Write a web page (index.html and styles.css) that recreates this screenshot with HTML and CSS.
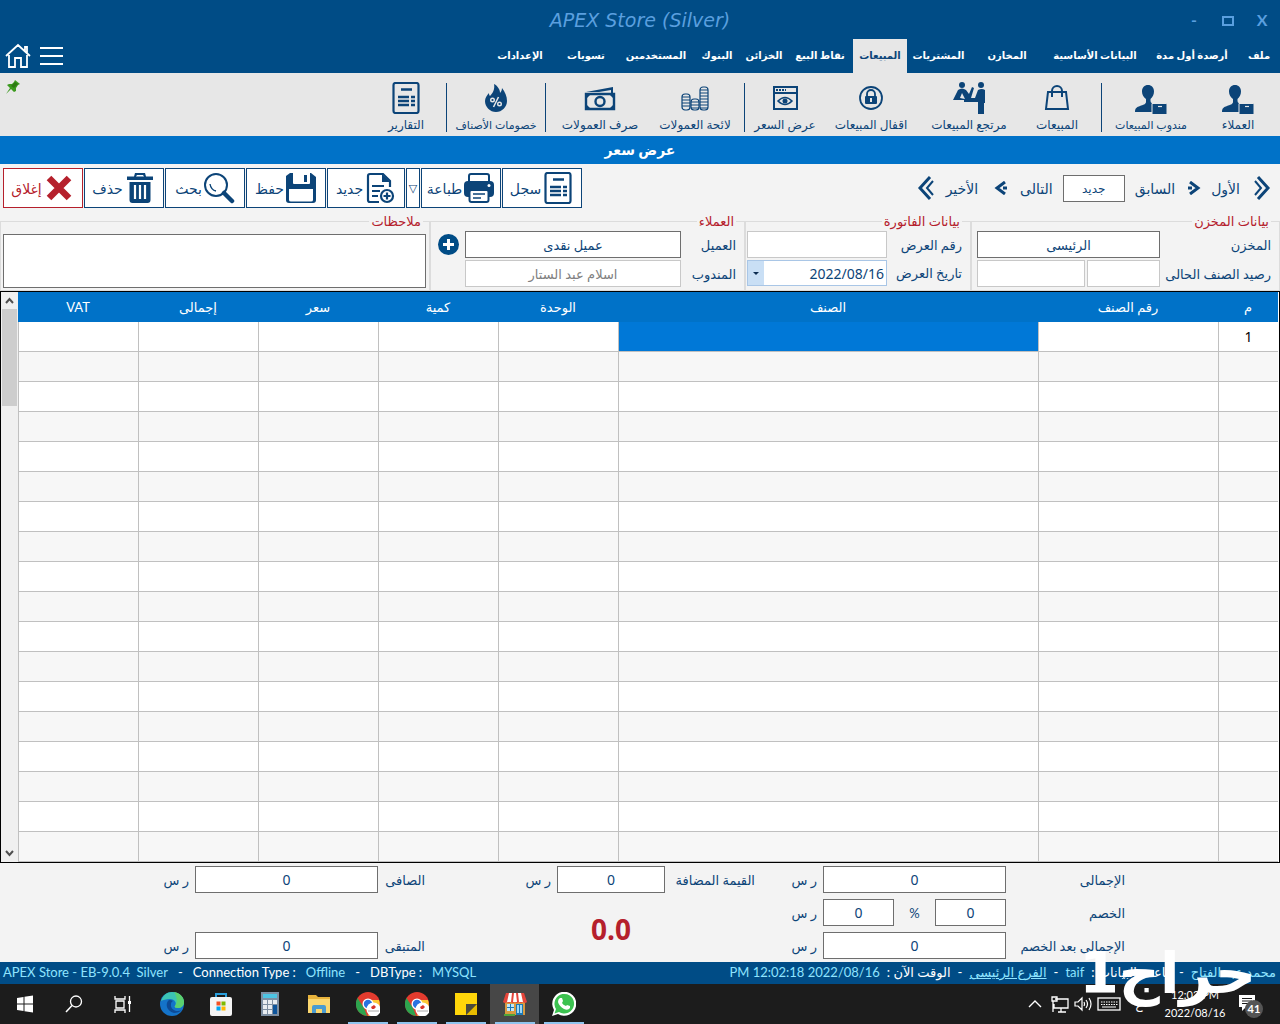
FILE: index.html
```html
<!DOCTYPE html>
<html lang="ar" dir="rtl">
<head>
    <meta charset="UTF-8">
    <meta name="viewport" content="width=device-width, initial-scale=1.0">
    <title>APEX Store (Silver)</title>
    <link rel="stylesheet" href="styles.css">
</head>
<body>
<svg style="display:none;">
    <symbol id="icon-home" viewBox="0 0 26 26">
        <path d="M1 13L13 2l12 11M20 8V4h2v6M4 12v12h6v-9h6v9h6V12" fill="none" stroke="#fff" stroke-width="1.8"/>
    </symbol>
    <symbol id="icon-pin" viewBox="0 0 16 16">
        <path d="M10 1l5 4-2 1-2 3 0 3-2 1-3-3-5 5 4-6-3-3 2-1 3 0 2-2z" fill="#3c9a1e"/>
        <path d="M10 3l3 2-4 4-3-2z" fill="#2d7a12"/>
    </symbol>
    <symbol id="icon-customer" viewBox="0 0 32 32">
        <path d="M13 3c3.500 0 6 2.500 6 6.500 0 3-1.500 6-3.500 7.500v2c0 2 2 2.500 3 3V30H0c0-4 2-5 5-6 3-1 6-2 6-4v-3C8.500 15.500 7 12.500 7 9.500 7 5.500 9.500 3 13 3z"/>
        <path d="M17 21.500h14a1 1 0 0 1 1 1V32a1 1 0 0 1-1 1H18a1 1 0 0 1-1-1z" stroke="#e7e7e7"/>
        <path d="M23 24.500h4" stroke="#e7e7e7" stroke-width="1.200"/>
    </symbol>
    <symbol id="icon-bag" viewBox="0 0 32 32">
        <path d="M7 10h18l2 17H5zM11 15V9a5 5 0 0 1 10 0v6" fill="none" stroke="currentColor" stroke-width="2"/>
    </symbol>
    <symbol id="icon-return" viewBox="0 0 32 32">
        <circle cx="9" cy="3" r="3"/>
        <circle cx="28" cy="3" r="3"/>
        <path d="M0 18L5 8q4-3 8 0l3 4 3-7 2 1-3 10h4l3-8q4-2 7 0v13h-1v11h-6V20H11v-2z"/>
        <path d="M9 11l-2 5 5 1z" fill="#e7e7e7"/>
    </symbol>
    <symbol id="icon-lock" viewBox="0 0 32 32">
        <circle cx="16" cy="16" r="11" fill="none" stroke="currentColor" stroke-width="1.800"/>
        <path d="M12 15v-3a4 4 0 0 1 8 0v3" fill="none" stroke="currentColor" stroke-width="1.800"/>
        <rect x="10" y="14" width="12" height="8" rx="1"/>
        <path d="M16 16v4" stroke="#e7e7e7" stroke-width="2"/>
    </symbol>
    <symbol id="icon-preview" viewBox="0 0 32 32">
        <path d="M5 5h23v22H5zM5 11h23" fill="none" stroke="currentColor" stroke-width="2"/>
        <path d="M7 8h10" stroke="currentColor" stroke-width="2" stroke-dasharray="2 1"/>
        <path d="M9 19q7-7 14 0-7 7-14 0z" fill="none" stroke="currentColor" stroke-width="1.600"/>
        <circle cx="16" cy="19" r="2.500"/>
    </symbol>
    <symbol id="icon-coins" viewBox="0 0 32 32">
        <g fill="none" stroke="currentColor" stroke-width="1.200">
            <rect x="3" y="12" width="8" height="16" rx="3"/>
            <rect x="12" y="17" width="8" height="11" rx="3"/>
            <rect x="21" y="5" width="8" height="23" rx="3"/>
            <path d="M3 15h8M3 18h8M3 21h8M3 24h8M12 20h8M12 23h8M12 26h8M21 8h8M21 11h8M21 14h8M21 17h8M21 20h8M21 23h8M21 26h8"/>
        </g>
    </symbol>
    <symbol id="icon-cash" viewBox="0 0 32 32">
        <path d="M2 12h28v15H2z" fill="none" stroke="currentColor" stroke-width="2.400"/>
        <path d="M2 10l27-5v6h-2V8l-12 2z"/>
        <circle cx="16" cy="19.500" r="4.500" fill="none" stroke="currentColor" stroke-width="2.400"/>
        <path d="M2 12h5l-5 5zM30 12h-5l5 5zM2 27h5l-5-5zM30 27h-5l5-5z"/>
    </symbol>
    <symbol id="icon-fire" viewBox="0 0 32 32">
        <path d="M14 2c4 2 6 6 6 9 1-1 2-3 2-5 3 4 5 8 5 13 0 6-5 11-11 11S5 25 5 19c0-3 2-6 4-8 0 1 0 2 1 3 3-3 5-7 4-12z"/>
        <path d="M18.500 15l-5 10" stroke="#e7e7e7" stroke-width="1.600"/>
        <circle cx="12.500" cy="18" r="1.800" fill="none" stroke="#e7e7e7" stroke-width="1.400"/>
        <circle cx="19.500" cy="22" r="1.800" fill="none" stroke="#e7e7e7" stroke-width="1.400"/>
    </symbol>
    <symbol id="icon-report" viewBox="0 0 32 32">
        <rect x="3.500" y="1" width="25" height="30" rx="2" fill="none" stroke="currentColor" stroke-width="2.200"/>
        <path d="M11 7.500h11M8 15h11M8 19h11M8 23h11M21 15h4M21 19h4M21 23h4" stroke="currentColor" stroke-width="2.600"/>
    </symbol>
    <symbol id="icon-printer" viewBox="0 0 32 32">
        <path d="M6 10V4a2 2 0 0 1 2-2h16a2 2 0 0 1 2 2v6" fill="none" stroke="currentColor" stroke-width="2"/>
        <rect x="1" y="9" width="30" height="16" rx="4"/>
        <rect x="6.500" y="18" width="19" height="12" rx="2" fill="#fff" stroke="currentColor" stroke-width="2"/>
        <path d="M10 22h12M10 26h8" stroke="currentColor" stroke-width="1.600"/>
        <circle cx="26" cy="13.500" r="1.500" fill="#fff"/>
    </symbol>
    <symbol id="icon-new" viewBox="0 0 32 32">
        <path d="M15 30H6a2 2 0 0 1-2-2V4a2 2 0 0 1 2-2h13l7 7v6" fill="none" stroke="currentColor" stroke-width="2.200"/>
        <path d="M18 2v8h8z"/>
        <path d="M8 14h12M8 19h8M8 24h6" stroke="currentColor" stroke-width="2.200"/>
        <circle cx="23" cy="24" r="6" fill="#fff" stroke="currentColor" stroke-width="2.200"/>
        <path d="M23 20.500v7M19.500 24h7" stroke="currentColor" stroke-width="2.200"/>
    </symbol>
    <symbol id="icon-save" viewBox="0 0 32 32">
        <path d="M5 1h21l5 4v23a3 3 0 0 1-3 3H4a3 3 0 0 1-3-3V4z"/>
        <path d="M8 1h17v10a1 1 0 0 1-1 1H9a1 1 0 0 1-1-1zM4 17h24v11q0 1.500-2 1.500H6q-2 0-2-1.500z" fill="#fff"/>
        <path d="M19 3h3v7h-3z"/>
    </symbol>
    <symbol id="icon-search" viewBox="0 0 32 32">
        <circle cx="13" cy="13" r="11" fill="none" stroke="currentColor" stroke-width="2"/>
        <path d="M7 12q1 6 6 7" fill="none" stroke="currentColor" stroke-width="1.400"/>
        <path d="M21 21l8 8" stroke="currentColor" stroke-width="4.500" stroke-linecap="round"/>
    </symbol>
    <symbol id="icon-trash" viewBox="0 0 32 32">
        <path d="M3 4.500h7l1-3.500h10l1 3.500h7V8H3zM13 3l-1 1.500h8L19 3z" fill-rule="evenodd"/>
        <path d="M5.500 10h21v18a3 3 0 0 1-3 3h-15a3 3 0 0 1-3-3z"/>
        <path d="M11 13v14M16 13v14M21 13v14" stroke="#fff" stroke-width="2.200"/>
    </symbol>
    <symbol id="icon-close" viewBox="0 0 32 32">
        <path d="M6 6l20 20M26 6L6 26" stroke="currentColor" stroke-width="6.500"/>
    </symbol>
    <symbol id="icon-first" viewBox="0 0 20 24">
        <path d="M3 5l6 7-6 7" fill="none" stroke="currentColor" stroke-width="2"/>
        <path d="M6 1l10 11L6 23" fill="none" stroke="currentColor" stroke-width="3"/>
    </symbol>
    <symbol id="icon-next" viewBox="0 0 14 14">
        <path d="M3 1l8 6-8 6" fill="none" stroke="currentColor" stroke-width="3"/>
        <path d="M1 5.500h4v3H1z"/>
    </symbol>
</svg>

<header class="title-bar">
    <div class="window-buttons">
        <button type="button">X</button>
        <button type="button" aria-label="تكبير"><span class="restore"></span></button>
        <button type="button">-</button>
    </div>
    <h1 dir="ltr">APEX Store (Silver)</h1>
</header>

<nav class="menu">
    <a href="#">ملف</a>
    <a href="#">أرصدة أول مدة</a>
    <a href="#">البيانات الأساسية</a>
    <a href="#">المخازن</a>
    <a href="#">المشتريات</a>
    <a href="#" class="active">المبيعات</a>
    <a href="#">نقاط البيع</a>
    <a href="#">الخزائن</a>
    <a href="#">البنوك</a>
    <a href="#">المستخدمين</a>
    <a href="#">تسويات</a>
    <a href="#">الإعدادات</a>
    <div class="menu-tools">
        <button type="button" class="burger" aria-label="القائمة"><i></i><i></i><i></i></button>
        <button type="button" aria-label="الرئيسية"><svg class="home"><use href="#icon-home"/></svg></button>
    </div>
</nav>

<section class="ribbon">
    <a href="#" class="w84"><svg class="icon"><use href="#icon-customer"/></svg><span>العملاء</span></a>
    <a href="#" class="w90 small"><svg class="icon"><use href="#icon-customer"/></svg><span>مندوب المبيعات</span></a>
    <div class="sep"></div>
    <a href="#" class="w80"><svg class="icon"><use href="#icon-bag"/></svg><span>المبيعات</span></a>
    <a href="#" class="w96"><svg class="icon"><use href="#icon-return"/></svg><span>مرتجع المبيعات</span></a>
    <a href="#" class="w100"><svg class="icon"><use href="#icon-lock"/></svg><span>اقفال المبيعات</span></a>
    <a href="#" class="w72"><svg class="icon"><use href="#icon-preview"/></svg><span>عرض السعر</span></a>
    <div class="sep"></div>
    <a href="#" class="w90"><svg class="icon"><use href="#icon-coins"/></svg><span>لائحة العمولات</span></a>
    <a href="#" class="w100"><svg class="icon"><use href="#icon-cash"/></svg><span>صرف العمولات</span></a>
    <div class="sep"></div>
    <a href="#" class="w90 small"><svg class="icon"><use href="#icon-fire"/></svg><span>خصومات الأصناف</span></a>
    <div class="sep"></div>
    <a href="#" class="w72"><svg class="icon"><use href="#icon-report"/></svg><span>التقارير</span></a>
    <svg class="pin"><use href="#icon-pin"/></svg>
</section>

<h2 class="page-title">عرض سعر</h2>

<section class="toolbar">
    <div class="pager">
        <button type="button"><svg class="double"><use href="#icon-first"/></svg>الأول</button>
        <button type="button"><svg class="single"><use href="#icon-next"/></svg>السابق</button>
        <input type="text" value="جديد" aria-label="رقم السجل">
        <button type="button">التالى<svg class="single flip"><use href="#icon-next"/></svg></button>
        <button type="button" class="last">الأخير<svg class="double flip"><use href="#icon-first"/></svg></button>
    </div>
    <div class="actions">
        <button type="button"><svg class="icon"><use href="#icon-report"/></svg>سجل</button>
        <button type="button"><svg class="icon"><use href="#icon-printer"/></svg>طباعة</button>
        <button type="button" class="drop">▽</button>
        <button type="button" class="new"><svg class="icon"><use href="#icon-new"/></svg>جديد</button>
        <button type="button"><svg class="icon"><use href="#icon-save"/></svg>حفظ</button>
        <button type="button"><svg class="icon"><use href="#icon-search"/></svg>بحث</button>
        <button type="button"><svg class="icon"><use href="#icon-trash"/></svg>حذف</button>
        <button type="button" class="close"><svg class="icon"><use href="#icon-close"/></svg>إغلاق</button>
    </div>
</section>

<section class="groups">
    <fieldset>
        <legend>بيانات المخزن</legend>
        <div class="row">
            <label for="store">المخزن</label>
            <input id="store" class="wide" type="text" value="الرئيسى">
        </div>
        <div class="row">
            <label for="stock">رصيد الصنف الحالى</label>
            <div class="pair wide">
                <input id="stock" class="soft" type="text">
                <input class="soft grow" type="text" aria-label="الوحدة">
            </div>
        </div>
    </fieldset>
    <fieldset>
        <legend>بيانات الفاتورة</legend>
        <div class="row">
            <label for="offer">رقم العرض</label>
            <input id="offer" class="mid soft" type="text">
        </div>
        <div class="row">
            <label for="date">تاريخ العرض</label>
            <div class="mid date">
                <input id="date" type="text" value="2022/08/16">
                <button type="button" aria-label="اختر التاريخ"></button>
            </div>
        </div>
    </fieldset>
    <fieldset>
        <legend>العملاء</legend>
        <div class="row customer">
            <label for="customer">العميل</label>
            <input id="customer" type="text" value="عميل نقدى">
            <button type="button" class="add" aria-label="إضافة عميل"></button>
        </div>
        <div class="row customer">
            <label for="agent">المندوب</label>
            <input id="agent" class="soft gray" type="text" value="اسلام عبد الستار">
        </div>
    </fieldset>
    <fieldset class="notes">
        <legend>ملاحظات</legend>
        <textarea aria-label="ملاحظات"></textarea>
    </fieldset>
</section>

<section class="grid">
    <table>
        <colgroup>
            <col class="c-num"><col class="c-code"><col>
            <col class="c-val"><col class="c-val"><col class="c-val"><col class="c-val"><col class="c-val">
        </colgroup>
        <thead>
        <tr><th>م</th><th>رقم الصنف</th><th>الصنف</th><th>الوحدة</th><th>كمية</th><th>سعر</th><th>إجمالى</th><th>VAT</th></tr>
        </thead>
        <tbody>
        <tr><td>1</td><td></td><td class="selected"></td><td></td><td></td><td></td><td></td><td></td></tr>
        <tr><td></td><td></td><td></td><td></td><td></td><td></td><td></td><td></td></tr>
        <tr><td></td><td></td><td></td><td></td><td></td><td></td><td></td><td></td></tr>
        <tr><td></td><td></td><td></td><td></td><td></td><td></td><td></td><td></td></tr>
        <tr><td></td><td></td><td></td><td></td><td></td><td></td><td></td><td></td></tr>
        <tr><td></td><td></td><td></td><td></td><td></td><td></td><td></td><td></td></tr>
        <tr><td></td><td></td><td></td><td></td><td></td><td></td><td></td><td></td></tr>
        <tr><td></td><td></td><td></td><td></td><td></td><td></td><td></td><td></td></tr>
        <tr><td></td><td></td><td></td><td></td><td></td><td></td><td></td><td></td></tr>
        <tr><td></td><td></td><td></td><td></td><td></td><td></td><td></td><td></td></tr>
        <tr><td></td><td></td><td></td><td></td><td></td><td></td><td></td><td></td></tr>
        <tr><td></td><td></td><td></td><td></td><td></td><td></td><td></td><td></td></tr>
        <tr><td></td><td></td><td></td><td></td><td></td><td></td><td></td><td></td></tr>
        <tr><td></td><td></td><td></td><td></td><td></td><td></td><td></td><td></td></tr>
        <tr><td></td><td></td><td></td><td></td><td></td><td></td><td></td><td></td></tr>
        <tr><td></td><td></td><td></td><td></td><td></td><td></td><td></td><td></td></tr>
        <tr><td></td><td></td><td></td><td></td><td></td><td></td><td></td><td></td></tr>
        <tr><td></td><td></td><td></td><td></td><td></td><td></td><td></td><td></td></tr>
        </tbody>
    </table>
    <div class="scrollbar">
        <svg viewBox="0 0 17 17"><path d="M5 11l3.500-4 3.500 4" fill="none" stroke="#505050" stroke-width="2"/></svg>
        <div class="thumb"></div>
        <svg viewBox="0 0 17 17"><path d="M5 6l3.500 4L12 6" fill="none" stroke="#505050" stroke-width="2"/></svg>
    </div>
</section>

<section class="totals">
    <label for="total">الإجمالى</label>
    <input id="total" type="text" value="0">
    <span class="unit">ر س</span>
    <label for="tax">القيمة المضافة</label>
    <input id="tax" type="text" value="0">
    <span class="unit">ر س</span>
    <label for="net">الصافى</label>
    <input id="net" type="text" value="0">
    <span class="unit">ر س</span>

    <label for="discount">الخصم</label>
    <div class="discount">
        <input id="discount" type="text" value="0">
        <span>%</span>
        <input type="text" value="0" aria-label="قيمة الخصم">
    </div>
    <span class="unit">ر س</span>

    <label for="after" class="new-row">الإجمالى بعد الخصم</label>
    <input id="after" type="text" value="0">
    <span class="unit">ر س</span>
    <label for="rest" class="rest">المتبقى</label>
    <input id="rest" type="text" value="0">
    <span class="unit">ر س</span>
    <output class="sum">0.0</output>
</section>

<footer class="status">
    <div class="status-user">
        <b>محمد عبد الفتاح</b><i>-</i><span>قاعدة البيانات :</span><b dir="ltr">taif</b><i>-</i><a href="#">الفرع الرئيسى</a><i>-</i><span>الوقت الآن :</span><b dir="ltr">PM 12:02:18 2022/08/16</b>
    </div>
    <div class="status-app" dir="ltr">
        <b>APEX Store - EB-9.0.4&nbsp; Silver</b><i>-</i><span>Connection Type :</span><b>Offline</b><i>-</i><span>DBType :</span><b>MYSQL</b>
    </div>
</footer>

<div class="taskbar" dir="ltr">
    <div class="apps">
        <button type="button" aria-label="Start">
            <svg viewBox="0 0 24 24"><path d="M4 6l6.500-1v6.500H4zM11.500 4.800L20 3.500v8h-8.500zM4 12.500h6.500V19L4 18zM11.500 12.500H20v8l-8.500-1.300z" fill="#fff"/></svg>
        </button>
        <button type="button" aria-label="Search">
            <svg viewBox="0 0 24 24"><circle cx="14" cy="9.500" r="5.500" fill="none" stroke="#fff" stroke-width="1.300"/><path d="M10 13.500L4 20" stroke="#fff" stroke-width="1.500"/></svg>
        </button>
        <button type="button" aria-label="Task view">
            <svg viewBox="0 0 24 24"><path d="M4 4v3h10V4M5 9h8v7H5zM4 21v-3h10v3M18.500 4v16" fill="none" stroke="#fff" stroke-width="1.300"/><path d="M17 9h3v3h-3z" fill="#fff"/></svg>
        </button>
        <button type="button" aria-label="Edge">
            <svg viewBox="0 0 24 24">
                <circle cx="12" cy="12" r="12" fill="#1473c9"/>
                <path d="M1 9C3 3 7 0 12 0c7 0 12 5 12 10 0 4-3 6-6 6-2 0-4-1-3-2 2-3 0-7-5-7-4 0-7 1-9 2z" fill="#3cc4b4"/>
                <path d="M14 0c6 1 10 5 10 10 0 4-3 6-6 6-2 0-4-1-3-2 3-4 2-9-1-14z" fill="#5bd06f"/>
                <path d="M9 8c-4 3-3 11 5 13 3 0 6-1 8-3-6 3-12-1-11-6 0-2 1-2 2-3-1-1-3-1-4-1z" fill="#0d4a96"/>
            </svg>
        </button>
        <button type="button" aria-label="Store">
            <svg viewBox="0 0 24 24">
                <path d="M7 6V2h10v4" fill="none" stroke="#2a9fdc" stroke-width="2"/>
                <rect x="1" y="5" width="22" height="19" rx="2" fill="#f4f4f4"/>
                <path d="M7.500 9.500h4v4h-4z" fill="#f25022"/><path d="M12.500 9.500h4v4h-4z" fill="#7fba00"/>
                <path d="M7.500 14.500h4v4h-4z" fill="#00a4ef"/><path d="M12.500 14.500h4v4h-4z" fill="#ffb900"/>
            </svg>
        </button>
        <button type="button" aria-label="Calculator">
            <svg viewBox="0 0 24 24">
                <rect x="3" width="18" height="24" fill="#7d8fa3"/>
                <path d="M5 2h14v4H5z" fill="#4dc4e4"/>
                <path d="M5 8h4v4H5zM10 8h4v4h-4zM15 8h4v4h-4zM5 13h4v4H5zM10 13h4v4h-4zM5 18h4v4H5zM10 18h4v4h-4z" fill="#e8edf2"/>
                <path d="M15 13h4v9h-4z" fill="#0d559c"/>
            </svg>
        </button>
        <button type="button" aria-label="Explorer">
            <svg viewBox="0 0 24 24">
                <path d="M1 3h8l2 2h12v16H1z" fill="#e8b33c"/><path d="M1 7h22v14H1z" fill="#fbd76f"/>
                <path d="M5 21v-6q0-2 2-2h10q2 0 2 2v6h-4v-4H9v4z" fill="#4a9bd0"/>
            </svg>
        </button>
        <button type="button" class="open" aria-label="Chrome">
            <svg viewBox="0 0 24 24">
                <circle cx="12" cy="12" r="12" fill="#e33b2e"/>
                <path d="M1.500 6L8 16l3 8A12 12 0 0 1 1.500 6z" fill="#2da44e"/><path d="M23 8H12l5 8-5 8A12 12 0 0 0 23 8z" fill="#fcc934"/>
                <circle cx="12" cy="12" r="5.500" fill="#fff"/><circle cx="12" cy="12" r="4.200" fill="#2a72e0"/>
                <circle cx="17.500" cy="17.500" r="7" fill="#fff"/><path d="M15 15l3-2 2 2-2 2h-2z" fill="#d8352a"/><path d="M12 19h11" stroke="#aaa"/>
            </svg>
        </button>
        <button type="button" class="open" aria-label="Chrome">
            <svg viewBox="0 0 24 24">
                <circle cx="12" cy="12" r="12" fill="#e33b2e"/>
                <path d="M1.500 6L8 16l3 8A12 12 0 0 1 1.500 6z" fill="#2da44e"/><path d="M23 8H12l5 8-5 8A12 12 0 0 0 23 8z" fill="#fcc934"/>
                <circle cx="12" cy="12" r="5.500" fill="#fff"/><circle cx="12" cy="12" r="4.200" fill="#2a72e0"/>
                <circle cx="17.500" cy="17.500" r="7" fill="#fff"/><path d="M15 15l3-2 2 2-2 2h-2z" fill="#d8352a"/><path d="M12 19h11" stroke="#aaa"/>
            </svg>
        </button>
        <button type="button" class="open" aria-label="Sticky notes">
            <svg viewBox="0 0 24 24"><path d="M1 1h22v11H12v11H1z" fill="#ffd60a"/><path d="M12 23V12h11z" fill="#4a4a3c"/><path d="M23 12v11H12z" fill="#e6bb00"/></svg>
        </button>
        <button type="button" class="open current" aria-label="APEX Store">
            <svg viewBox="0 0 24 24">
                <path d="M2 10h20v13H2z" fill="#d99a3f"/>
                <path d="M4 12h7v7H4z" fill="#bfe8fb"/><path d="M7.500 12v7M4 15.500h7" stroke="#1c79b8"/>
                <path d="M13 12h7v11h-7z" fill="#1c79b8"/><path d="M14 13h2v8h-2zM17 13h2v8h-2z" fill="#9fd8f5"/>
                <path d="M3 1h18l3 9q-2 2-4 0-2 2-4 0-2 2-4 0-2 2-4 0-2 2-4 0-2 2-4 0z" fill="#e5453a"/>
                <path d="M6 1h3l-1 9H4zM11 1h2l1 9h-4zM15 1h3l2 9h-4z" fill="#fff"/>
                <path d="M1 22h11v2H1z" fill="#4ea43a"/>
            </svg>
        </button>
        <button type="button" class="open" aria-label="WhatsApp">
            <svg viewBox="0 0 24 24">
                <path d="M0 24l2-6A12 12 0 1 1 6 22z" fill="#fff"/><path d="M2.500 21.500L4 17a9.800 9.800 0 1 1 3 3z" fill="#3cc250"/>
                <path d="M8 6l2 0 1 3-1 2q1 2 4 3l1-1 3 1v2q-2 3-6 1-5-3-6-7 0-3 2-4z" fill="#fff"/>
            </svg>
        </button>
    </div>
    <div class="tray">
        <svg viewBox="0 0 20 20"><path d="M4 13l6-6 6 6" fill="none" stroke="#fff" stroke-width="1.400"/></svg>
        <svg viewBox="0 0 20 20"><path d="M6 5h13v9H5v-4M9 18h8M12 14v4M3 3h5v4H3zM4 7v11" fill="none" stroke="#fff" stroke-width="1.300"/></svg>
        <svg viewBox="0 0 20 20"><path d="M2 8h3l4-4v12l-4-4H2zM11 8q1 2 0 4M13 6q3 4 0 8M16 4q4 6 0 12" fill="none" stroke="#fff" stroke-width="1.200"/></svg>
        <svg class="keyboard" viewBox="0 0 24 20"><rect x="1" y="4" width="22" height="12" fill="none" stroke="#fff" stroke-width="1.300"/><path d="M4 8h17M4 10.500h17" stroke="#fff" stroke-width="1.200" stroke-dasharray="1.500 1"/><path d="M5 13h14" stroke="#fff"/></svg>
        <span class="lang">ع</span>
        <time>12:02 PM<br>2022/08/16</time>
        <div class="notice">
            <svg viewBox="0 0 20 20"><path d="M2 3h16v12h-9l-4 4v-4H2z" fill="#fff"/><path d="M5 6.500h10M5 9h10M5 11.500h10" stroke="#1c1c1c"/></svg>
            <span class="badge">41</span>
        </div>
    </div>
</div>
<div class="watermark">حراج1</div>
</body>
</html>
```
FILE: styles.css
```css
* {
    box-sizing: border-box;
}

body {
    margin: 0;
    min-height: 100vh;
    display: flex;
    flex-direction: column;
    position: relative;
    font-family: Lato, "DejaVu Sans", sans-serif;
    font-size: 13px;
    color: #0c4478;
    background: #f3f3f3;
}

button, input, textarea {
    font: inherit;
    color: inherit;
}

button {
    padding: 0;
    border: 0;
    background: none;
}

a {
    color: inherit;
    text-decoration: none;
}

input {
    min-width: 0;
    height: 27px;
    padding: 0 2px;
    border: 1px solid #6e6e6e;
    background: #fff;
    text-align: center;
}

input.soft {
    border-color: #c8c8c8;
}

.icon {
    width: 32px;
    height: 32px;
    flex: none;
    fill: currentColor;
}

/* title and menu */

.title-bar {
    display: grid;
    grid-template-columns: 114px 1fr 114px;
    align-items: center;
    height: 39px;
    background: #004c86;
    color: #5a9fdf;
}

.title-bar h1 {
    margin: 0;
    font: italic 19px "DejaVu Sans", sans-serif;
    text-align: center;
}

.window-buttons {
    display: flex;
}

.window-buttons button {
    width: 34px;
    font-size: 16px;
    font-weight: bold;
}

.window-buttons button:first-child {
    margin-right: 1px;
}

.restore {
    display: inline-block;
    width: 12px;
    height: 10px;
    border: 2px solid #5a9fdf;
}

.menu {
    display: grid;
    grid-template-columns: 42px 92px 102px 74px 63px 54px 66px 46px 48px 74px 66px 66px 1fr;
    height: 34px;
    background: #004c86;
    color: #fff;
    font-size: 10px;
    font-weight: bold;
    line-height: 32px;
    text-align: center;
    white-space: nowrap;
}

.menu a.active {
    background: #e7e7e7;
    color: #0c4478;
}

.menu-tools {
    display: flex;
    justify-content: flex-end;
    align-items: center;
    gap: 9px;
    padding-left: 5px;
}

.menu-tools button {
    display: flex;
}

.home {
    width: 26px;
    height: 26px;
}

.menu-tools .burger {
    flex-direction: column;
    gap: 6px;
}

.burger i {
    width: 23px;
    height: 2px;
    background: #fff;
}

/* ribbon */

.ribbon {
    display: flex;
    height: 63px;
    background: #e7e7e7;
    color: #0c4478;
    font-size: 12px;
}

.ribbon a {
    display: flex;
    flex-direction: column;
    align-items: center;
    padding-top: 9px;
    white-space: nowrap;
}

.ribbon a span {
    line-height: 22px;
}

.ribbon .small {
    font-size: 11px;
}

.w72 {
    width: 72px;
}

.w80 {
    width: 80px;
}

.w84 {
    width: 84px;
}

.w90 {
    width: 90px;
}

.w96 {
    width: 96px;
}

.w100 {
    width: 100px;
}

.sep {
    width: 1px;
    margin: 10px 4px 4px;
    background: #0c4478;
}

.pin {
    width: 16px;
    height: 16px;
    margin: 6px auto 0 5px;
}

.page-title {
    margin: 0;
    background: #0072c8;
    color: #fff;
    font-size: 14px;
    line-height: 28px;
    text-align: center;
}

/* toolbar */

.toolbar {
    display: flex;
    justify-content: space-between;
    height: 49px;
    padding: 4px 8px 0 3px;
    font-size: 14px;
}

.pager {
    display: flex;
    align-items: center;
    gap: 10px;
    height: 40px;
}

.pager button {
    display: flex;
    align-items: center;
    gap: 12px;
}

.pager .last {
    margin-right: 6px;
    gap: 10px;
}

.pager input {
    width: 62px;
    font-size: 12px;
}

.double {
    width: 20px;
    height: 24px;
    fill: currentColor;
}

.single {
    width: 14px;
    height: 14px;
    fill: currentColor;
}

.flip {
    transform: scaleX(-1);
}

.actions {
    display: flex;
    gap: 1px;
}

.actions button {
    display: flex;
    align-items: center;
    justify-content: center;
    gap: 1px;
    width: 80px;
    height: 40px;
    border: 1px solid #0c4478;
    background: #fff;
}

.actions .new {
    width: 78px;
}

.actions .drop {
    width: 14px;
    font-size: 11px;
}

.actions .close {
    border-color: #b5202c;
    color: #b5202c;
}

/* data groups */

.groups {
    display: grid;
    grid-template-columns: 309fr 226fr 315fr 430fr;
    height: 78px;
}

fieldset {
    min-width: 0;
    margin: 0;
    padding: 2px 8px 0 5px;
    border: 1px solid #dcdcdc;
}

legend {
    padding: 0 2px;
    line-height: 16px;
    color: #b5202c;
}

.row {
    display: flex;
    align-items: center;
    justify-content: space-between;
    margin-bottom: 2px;
    white-space: nowrap;
}

.wide {
    width: 183px;
}

.mid {
    width: 140px;
}

fieldset:nth-child(2) {
    padding-left: 1px;
}

.pair {
    display: flex;
    gap: 2px;
}

.pair input {
    width: 73px;
}

.pair .grow {
    flex: 1;
}

.date {
    display: flex;
    height: 26px;
    border: 1px solid #a9c6e6;
    background: #fff;
}

.date input {
    flex: 1;
    height: 24px;
    border: 0;
    font: 14px "Noto Sans", sans-serif;
    text-align: right;
}

.date button {
    display: flex;
    align-items: center;
    justify-content: center;
    width: 16px;
    background: #c9dff5;
}

.date button::after {
    content: "";
    border: 3px solid transparent;
    border-top-color: #0c2c50;
    border-bottom: 0;
}

.row.customer {
    justify-content: flex-start;
}

.customer label {
    width: 55px;
}

.customer input {
    width: 216px;
}

.gray {
    color: #808080;
}

.add {
    width: 21px;
    height: 21px;
    margin-right: 6px;
    border-radius: 50%;
    background:
        linear-gradient(#fff, #fff) center / 11px 3px no-repeat,
        linear-gradient(#fff, #fff) center / 3px 11px no-repeat,
        #004c86;
}

.notes {
    padding: 5px 3px 0 2px;
}

.notes legend {
    margin-right: 3px;
}

.notes textarea {
    display: block;
    width: 100%;
    height: 54px;
    border: 1px solid #6e6e6e;
    background: #fff;
    resize: none;
}

/* items table */

.grid {
    display: flex;
    flex: 1;
    border: 1px solid #000;
    background: #fff;
}

table {
    flex: 1;
    margin-right: 1px;
    border-collapse: separate;
    border-spacing: 0;
    table-layout: fixed;
}

.c-num {
    width: 60px;
}

.c-code {
    width: 180px;
}

.c-val {
    width: 120px;
}

th {
    height: 30px;
    padding: 0;
    background: #0072c8;
    color: #fff;
    font-size: 13px;
    font-weight: normal;
}

td {
    height: 30px;
    padding: 0;
    border-bottom: 1px solid #c0c0c0;
    border-left: 1px solid #c0c0c0;
    color: #000;
    font: 14px "Noto Sans", sans-serif;
    text-align: center;
}

tbody tr:nth-child(even) {
    background: #f7f7f7;
}

td.selected {
    background: #0078d7;
}

.scrollbar {
    display: flex;
    flex-direction: column;
    width: 17px;
    background: #f0f0f0;
}

.scrollbar svg {
    height: 17px;
}

.thumb {
    height: 97px;
    margin: 0 1px auto;
    background: #cdcdcd;
}

/* totals */

.totals {
    display: grid;
    grid-template-columns: 119px 183px 68px 90px 108px 132px 47px 183px 1fr;
    grid-auto-rows: 27px;
    gap: 6px 0;
    align-items: center;
    height: 99px;
    padding: 3px 155px 0 0;
    white-space: nowrap;
}

.totals input {
    font: 14px "Noto Sans", sans-serif;
}

.totals .unit {
    padding-right: 6px;
}

.discount {
    display: flex;
    align-items: center;
    justify-content: space-between;
}

.discount input {
    width: 71px;
}

.new-row {
    grid-column: 1;
}

.rest {
    grid-column: 7;
}

.sum {
    grid-column: 5;
    grid-row: 2 / span 2;
    color: #b5202c;
    font: bold 28px "Open Sans", sans-serif;
    text-align: center;
}

/* status bar and taskbar */

.status {
    display: flex;
    justify-content: space-between;
    height: 22px;
    padding: 0 4px 0 3px;
    background: #004c86;
    color: #fff;
    font-size: 13px;
    line-height: 20px;
    white-space: nowrap;
}

.status b, .status a {
    color: #8fe4ff;
    font-weight: normal;
}

.status a {
    text-decoration: underline;
}

.status div {
    display: flex;
    gap: 10px;
}

.status i {
    font-style: normal;
}

.status .status-user {
    gap: 7px;
}

.taskbar {
    display: flex;
    justify-content: space-between;
    height: 40px;
    background: #1c1c1c;
    color: #fff;
    font-size: 12px;
}

.apps {
    display: flex;
}

.apps button {
    width: 49px;
    padding-top: 2px;
}

.apps svg {
    width: 24px;
    height: 24px;
}

.apps .open {
    background: linear-gradient(#8fc4ee, #8fc4ee) bottom / 40px 2px no-repeat;
}

.apps .current {
    background-color: #474747;
}

.tray {
    display: flex;
    align-items: center;
    gap: 4px;
    padding-right: 17px;
}

.tray svg {
    width: 20px;
    height: 20px;
}

.tray .keyboard {
    width: 24px;
}

.lang {
    width: 28px;
    text-align: center;
}

.tray time {
    width: 76px;
    font-size: 11px;
    line-height: 18px;
    text-align: center;
}

.notice {
    position: relative;
    width: 26px;
    height: 24px;
}

.badge {
    position: absolute;
    left: 8px;
    top: 8px;
    width: 18px;
    height: 18px;
    border-radius: 50%;
    background: #555;
    font-size: 11px;
    font-weight: bold;
    line-height: 18px;
    text-align: center;
}

.watermark {
    position: absolute;
    right: 24px;
    bottom: 19px;
    color: #fff;
    font: bold 57px/64px "DejaVu Sans", sans-serif;
    pointer-events: none;
}
```
